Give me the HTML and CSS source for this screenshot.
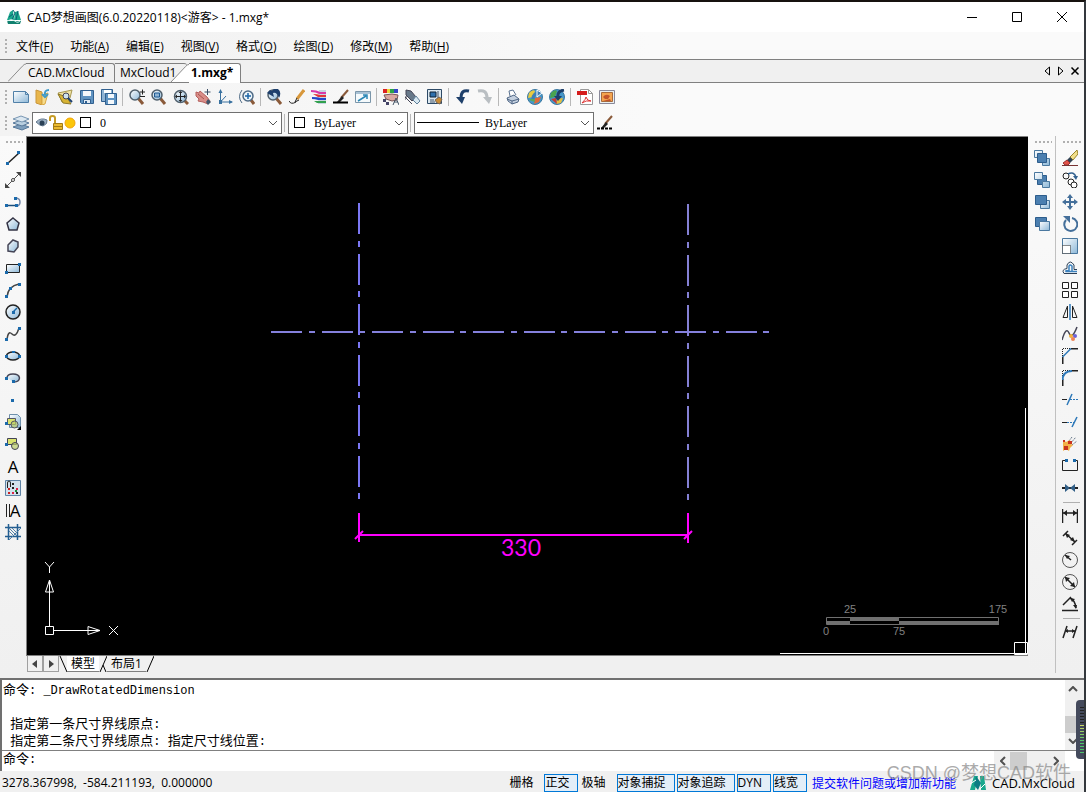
FILE: index.html
```
<!DOCTYPE html>
<html lang="zh-CN">

<head>
	<meta charset="UTF-8">
	<title>CAD梦想画图</title>
	<link rel="stylesheet" href="styles.css">
</head>

<body>
	<svg class="defs" width="0" height="0">
		<defs>
			<linearGradient id="sky" x1="0" y1="0" x2="1" y2="1">
				<stop offset="0" stop-color="#fff" />
				<stop offset="1" stop-color="#8db8d8" />
			</linearGradient>
		</defs>
		<symbol id="logo" viewBox="0 0 16 16">
			<path d="M1 12h14l-1 3H2z" fill="#11806f" stroke="none" />
			<path d="M4 3l3-2 1 10H1zM9 3l3-1 3 9H8z" fill="#1aa68c" stroke="none" />
			<path d="M7 1l2 3-3 7M12 2l-2 9M3 8l4-3" stroke="#0b5f73" />
			<path d="M1 12q5-3 8 0t6-1" stroke="#d8f4ee" />
		</symbol>
		<symbol id="lens" viewBox="0 0 16 16">
			<path d="M9 9l5 6" stroke="#8a5a3a" stroke-width="3" />
			<circle cx="6" cy="6" r="5" fill="url(#sky)" stroke="#4f5f6c" stroke-width="1.5" />
		</symbol>
		<symbol id="brush" viewBox="0 0 16 16">
			<path d="M15 1L8 9" stroke="#8a5a3a" stroke-width="2" />
			<path d="M9 7l2 2-4 4-3 0z" fill="#222" stroke="none" />
		</symbol>
		<symbol id="down" viewBox="0 0 10 6">
			<path d="M1 1l4 4 4-4" stroke="#555" />
		</symbol>
	</svg>

	<div class="app">
		<header class="titlebar">
			<svg class="icon"><use href="#logo" /></svg>
			<h1>CAD梦想画图(6.0.20220118)&lt;游客&gt; - 1.mxg*</h1>
			<button class="win" aria-label="最小化"><svg viewBox="0 0 12 12"><path d="M1 6.5h10" stroke="#000" /></svg></button>
			<button class="win" aria-label="最大化"><svg viewBox="0 0 12 12"><path d="M1.500 1.500h9v9h-9z" stroke="#000" /></svg></button>
			<button class="win" aria-label="关闭"><svg viewBox="0 0 12 12"><path d="M1 1l10 10M11 1L1 11" stroke="#000" /></svg></button>
		</header>

		<nav class="menu">
			<span class="grip"></span>
			<button>文件(<u>F</u>)</button>
			<button>功能(<u>A</u>)</button>
			<button>编辑(<u>E</u>)</button>
			<button>视图(<u>V</u>)</button>
			<button>格式(<u>O</u>)</button>
			<button>绘图(<u>D</u>)</button>
			<button>修改(<u>M</u>)</button>
			<button>帮助(<u>H</u>)</button>
		</nav>

		<div class="doctabs">
			<button class="doctab"><svg class="slant" viewBox="0 0 20 20"><path d="M0 20L16 3Q18 .5 20 .5" /></svg><span>CAD.MxCloud</span></button>
			<button class="doctab middle"><span>MxCloud1</span></button>
			<button class="doctab active"><svg class="slant" viewBox="0 0 20 20"><path d="M0 20L16 3Q18 .5 20 .5V20z" fill="#fff" stroke="none" /><path d="M0 20L16 3Q18 .5 20 .5" /></svg><span>1.mxg*</span></button>
			<div class="tabnav">
				<button aria-label="上一个"><svg viewBox="0 0 10 10"><path d="M7.500 1v8L3 5z" stroke="#000" /></svg></button>
				<button aria-label="下一个"><svg viewBox="0 0 10 10"><path d="M2.500 1v8L7 5z" stroke="#000" /></svg></button>
				<button aria-label="关闭标签"><svg viewBox="0 0 10 10"><path d="M1.500 1.500l7 7M8.500 1.500l-7 7" stroke="#000" stroke-width="1.500" /></svg></button>
			</div>
		</div>

		<div class="toolbar">
			<span class="grip"></span>
			<button class="tool" aria-label="新建"><svg viewBox="0 0 16 16"><path d="M.5 2.500h12l3 3v8H.5z" fill="url(#sky)" stroke="#5080a8" /><path d="M12.500 2.500v3h3" stroke="#5080a8" /></svg></button>
			<button class="tool" aria-label="打开"><svg viewBox="0 0 16 16"><path d="M1 1l6 2v13l-6-2z" fill="#e8b64c" stroke="#c9963a" /><path d="M7 6l6-2-3 11-3 1z" fill="#f7dc8c" stroke="#d9a844" /><path d="M14 1q-5 0-4 5M7 5l3 3 3-3" stroke="#3f9ac9" stroke-width="2" /></svg></button>
			<button class="tool" aria-label="打开图纸"><svg viewBox="0 0 16 16"><path d="M1 4l5-1 9-2-2 8-8 4z" fill="#f0e2a4" stroke="#a89850" /><path d="M1 5l5 9 8 1-4-7z" fill="#d8b434" stroke="#8e7a2c" /><circle cx="9" cy="7" r="3" fill="#cfe2ee" stroke="#445" /><path d="M11 9l4 4" stroke="#1d3f6c" stroke-width="2" /></svg></button>
			<button class="tool" aria-label="保存"><svg viewBox="0 0 16 16"><path d="M1.500 1.500h13v13h-12l-1-1z" fill="#5f93c1" stroke="#31608f" /><path d="M4 2h8v5H4z" fill="#f4f8fb" stroke="none" /><path d="M4.500 10.500h7v4h-7z" fill="#e3ecf4" stroke="#31608f" /><path d="M6 12h2v2H6z" fill="#31608f" stroke="none" /></svg></button>
			<button class="tool" aria-label="另存为"><svg viewBox="0 0 16 16"><path d="M.5.500h11v12H.5z" fill="#8fb3d3" stroke="#31608f" /><path d="M3 1h7v3H3z" fill="#fff" stroke="none" /><path d="M4.500 4.500h11v11h-11z" fill="#5f93c1" stroke="#31608f" /><path d="M7 5h6v4H7zM7 11h6v4H7z" fill="#f4f8fb" stroke="none" /></svg></button>
			<span class="sep"></span>
			<button class="tool" aria-label="缩放"><svg viewBox="0 0 16 16"><use href="#lens" /><path d="M11 3h5M13.500.5v5M11 7.500h5" stroke="#222" /></svg></button>
			<button class="tool" aria-label="窗口缩放"><svg viewBox="0 0 16 16"><use href="#lens" /><path d="M3.500 4h5v4h-5z" fill="#8fb3d3" stroke="#1d5a92" /></svg></button>
			<button class="tool" aria-label="范围缩放"><svg viewBox="0 0 16 16"><path d="M11 11l4 4" stroke="#8a5a3a" stroke-width="3" /><circle cx="7.500" cy="7.500" r="6" fill="url(#sky)" stroke="#4f5f6c" stroke-width="1.500" /><path d="M3 7.500h9M7.500 3v9" stroke="#222" /><path d="M7.500 2l2 2h-4zM7.500 13l2-2h-4zM2 7.500l2-2v4zM13 7.500l-2-2v4z" fill="#222" stroke="none" /></svg></button>
			<button class="tool" aria-label="平移"><svg viewBox="0 0 16 16"><path d="M1 3l3 1 1-2 7 6 3 4-2 3-5-2-5-1 1-2-3-3z" fill="#d98d88" stroke="#b5605d" /><path d="M13 10l3 3-3 3-2-3z" fill="#415569" stroke="none" /><path d="M12.500 0v6M9.500 3h6" stroke="#3b4f66" /><path d="M3 5l6 5" stroke="#a85552" /></svg></button>
			<button class="tool" aria-label="坐标系"><svg viewBox="0 0 16 16"><path d="M3.500 2v11H15M3.500 13L9 7" stroke="#39719f" /><path d="M3.500 0l2 4h-4zM16 13l-4-2v4zM2 11h3v4H2z" fill="#39719f" stroke="none" /></svg></button>
			<button class="tool" aria-label="实时缩放"><svg viewBox="0 0 16 16"><path d="M3 1Q-2 8 3 14" stroke="#4e6a85" /><path d="M12 11l3 4" stroke="#8a5a3a" stroke-width="3" /><circle cx="9" cy="7" r="5" fill="#edf5fa" stroke="#4e6a85" stroke-width="1.500" /><path d="M6 7h6M9 4v6" stroke="#1d66a8" stroke-width="1.500" /></svg></button>
			<span class="sep"></span>
			<button class="tool" aria-label="上一视图"><svg viewBox="0 0 16 16"><use href="#lens" /><path d="M0 4l7 4-1-4q4-1 6 5 3-6-1-9-5-1-6 2L3 1z" fill="#1d3f6c" stroke="none" /></svg></button>
			<button class="tool" aria-label="画笔"><svg viewBox="0 0 16 16"><path d="M15 1L8 10" stroke="#d8983c" stroke-width="3" /><path d="M8 9l-2 4 4-2M0 12q2 4 7 1" stroke="#222" /></svg></button>
			<button class="tool" aria-label="图层颜色"><svg viewBox="0 0 16 16"><path d="M8 1h7v14H7z" fill="#c5d3e0" stroke="none" /><path d="M0 1q6 0 9 2h6v2H8Q5 3 0 3z" fill="#d839a8" stroke="none" /><path d="M2 5q5 0 7 1h6v2H7z" fill="#e23636" stroke="none" /><path d="M1 8q6 0 8 1h6v2H7Q4 10 1 10z" fill="#2447c9" stroke="none" /><path d="M3 12h12v2H6z" fill="#31a04d" stroke="none" /></svg></button>
			<button class="tool" aria-label="线型"><svg viewBox="0 0 16 16"><use href="#brush" /><path d="M0 13.500h15" stroke="#000" stroke-width="2" /></svg></button>
			<button class="tool" aria-label="外部参照"><svg viewBox="0 0 16 16"><path d="M.5 2.500h15v11H.5z" fill="#f5fafc" stroke="#7b96aa" /><path d="M1 3h14v2H1z" fill="#a9c2d5" stroke="none" /><path d="M3 12l8-5M8 6h4v4" stroke="#2a86b5" stroke-width="1.500" /></svg></button>
			<span class="sep"></span>
			<button class="tool" aria-label="特性"><svg viewBox="0 0 16 16"><path d="M0 0h4v4H0z" fill="#d22" stroke="none" /><path d="M4 0h3v4H4z" fill="#ead83b" stroke="none" /><path d="M7 0h4v4H7z" fill="#29a348" stroke="none" /><path d="M11 0h4v4h-4z" fill="#3445c4" stroke="none" /><path d="M1 6l8-1 6 1-1 5-5 1-6-2z" fill="#d9a7a0" stroke="#755" /><path d="M0 10h3v3H0zM3 13h3v3H3z" fill="#446" stroke="none" /><path d="M10 16l3-7 3 7M11 13h4" stroke="#456" /></svg></button>
			<button class="tool" aria-label="特性匹配"><svg viewBox="0 0 16 16"><path d="M1 1l5 1 5 6-4 4-6-6z" fill="#68798a" stroke="#445" /><path d="M11 7l4 5-3 3-4-4z" fill="#d8e8f2" stroke="#5f7f98" /><path d="M0 8l7 7M2 8H0v3" stroke="#445" /></svg></button>
			<button class="tool" aria-label="设计中心"><svg viewBox="0 0 16 16"><path d="M.5.5h14v14H.5z" fill="#dce8f0" stroke="#2d4a66" /><path d="M3 3h6v5H3z" fill="#2f71ad" stroke="#123" /><path d="M11 2v8M3 11h4M3 13h5" stroke="#456" /><path d="M8 11l4-3 3 2-2 5-3-1z" fill="#c98b34" stroke="#765" /></svg></button>
			<span class="sep"></span>
			<button class="tool" aria-label="撤销"><svg viewBox="0 0 16 16"><path d="M14 2Q6 0 6 9" stroke="#1e3f6a" stroke-width="3" /><path d="M1 8h9l-3 7z" fill="#1e3f6a" stroke="none" /></svg></button>
			<button class="tool" aria-label="重做"><svg viewBox="0 0 16 16"><path d="M1 2q9-2 9 7" stroke="#b9bec2" stroke-width="3" /><path d="M6 8h9l-3 7z" fill="#b9bec2" stroke="none" /></svg></button>
			<span class="sep"></span>
			<button class="tool" aria-label="打印"><svg viewBox="0 0 16 16"><path d="M5 7L4 2l4-1 3 5" fill="#fff" stroke="#5b7290" /><path d="M2 9l7-3 5 4-1 3-6 2-4-3z" fill="#c4d0df" stroke="#4e6584" /><path d="M2 10l5 2 7-2M7 12v3" stroke="#4e6584" /></svg></button>
			<button class="tool" aria-label="上传"><svg viewBox="0 0 16 16"><circle cx="8" cy="8" r="7.500" fill="#4597ca" stroke="#3c78a0" /><path d="M2 4q4-4 6-2L6 8 1 9z" fill="#e8cb42" stroke="none" /><path d="M8 9l6-1-2 5-5 2z" fill="#df6a3c" stroke="none" /><path d="M2 11l5-3 1 5z" fill="#5aaa58" stroke="none" /><path d="M6 10q0-6 6-6" stroke="#3f7fb5" stroke-width="3" /><path d="M10 1l5 3-5 4z" fill="#3f7fb5" stroke="#fff" /></svg></button>
			<button class="tool" aria-label="下载"><svg viewBox="0 0 16 16"><circle cx="8" cy="8" r="7.500" fill="#4597ca" stroke="#3c78a0" /><path d="M2 4q4-4 6-2L6 8 1 9z" fill="#49a34f" stroke="none" /><path d="M8 10l6-1-2 5-5 1z" fill="#e5be3e" stroke="none" /><path d="M2 10l5-1 1 6z" fill="#c63b34" stroke="none" /><path d="M15 1Q8 2 9 8" stroke="#1e3f6a" stroke-width="3" /><path d="M5 7h8l-4 5z" fill="#1e3f6a" stroke="none" /></svg></button>
			<span class="sep"></span>
			<button class="tool" aria-label="导出PDF"><svg viewBox="0 0 16 16"><path d="M3.500.5h8l4 4v11h-12z" fill="#fff" stroke="#999" /><path d="M11.500.5v4h4" stroke="#999" /><path d="M0 2h10v4H0z" fill="#d51c1c" stroke="none" /><path d="M5 14q4-4 4-6 1 4 5 4-5-1-9 2" stroke="#d33" /></svg></button>
			<button class="tool" aria-label="导出图片"><svg viewBox="0 0 16 16"><path d="M.5 1.500h15v13H.5z" fill="#e9eef0" stroke="#889" /><path d="M2.500 3.500h11v9h-11z" fill="#f4a44f" stroke="#a86a3c" /><path d="M4 8q3-4 7-1l-2 3H6zM4 12l7-2 1 2z" fill="#c2542c" stroke="none" /></svg></button>
		</div>

		<div class="toolbar props">
			<span class="grip"></span>
			<button class="tool" aria-label="图层"><svg viewBox="0 0 16 16"><path d="M0 12l8-3 8 3-7 3z" fill="#7e9fbd" stroke="#58799a" /><path d="M0 8l8-3 8 3-7 3z" fill="#b9cfe0" stroke="#58799a" /><path d="M0 4l8-3 8 3-7 3z" fill="#dbe7f0" stroke="#7896b2" /></svg></button>
			<div class="combo layer">
				<div class="marks">
					<svg viewBox="0 0 14 16"><path d="M1 7q5-5 11-2 1 4-4 6-3 0-7-4z" fill="#9bb0c4" stroke="#667b90" /><circle cx="7" cy="8" r="2.500" fill="#2b4156" stroke="none" /></svg>
					<svg viewBox="0 0 14 16"><path d="M1 6V3q0-2 2.500-2T6 3v6" stroke="#c59b25" stroke-width="2" /><path d="M4.500 8.500h9v6h-9z" fill="#eab92d" stroke="#a37a14" /><path d="M5 11.500h8" stroke="#a37a14" /></svg>
					<svg viewBox="0 0 14 16"><circle cx="7" cy="8" r="5" fill="#fbc60a" stroke="#f3a50a" /></svg>
					<i class="swatch"></i>
				</div>
				<select aria-label="当前图层"><option>0</option></select>
				<svg class="arrow"><use href="#down" /></svg>
			</div>
			<span class="sep"></span>
			<div class="combo color">
				<div class="marks"><i class="swatch"></i></div>
				<select aria-label="颜色"><option>ByLayer</option></select>
				<svg class="arrow"><use href="#down" /></svg>
			</div>
			<span class="sep"></span>
			<div class="combo ltype">
				<div class="marks"><i class="line"></i></div>
				<select aria-label="线型"><option>ByLayer</option></select>
				<svg class="arrow"><use href="#down" /></svg>
			</div>
			<button class="tool" aria-label="线型管理"><svg viewBox="0 0 16 16"><use href="#brush" /><path d="M0 13.500h15" stroke="#000" stroke-width="2" stroke-dasharray="3 1" /></svg></button>
		</div>

		<main class="work">
			<div class="side left">
				<span class="grip flat"></span>
				<button class="tool" aria-label="直线"><svg viewBox="0 0 16 16"><path d="M2 14L14 3" stroke-width="1.500" /><path class="node" d="M1 12h3v3H1zM12 1h3v3h-3z" /></svg></button>
				<button class="tool" aria-label="构造线"><svg viewBox="0 0 16 16"><path d="M1 15L15 1" stroke="#555" /><path d="M0 16v-5l5 5zM16 0v5l-5-5z" fill="#444" stroke="none" /><circle cx="8" cy="8" r="1.500" fill="#fff" stroke="#444" /></svg></button>
				<button class="tool" aria-label="多段线"><svg viewBox="0 0 16 16"><path d="M1 11.500h10" stroke="#1b4d7b" stroke-width="1.500" /><path d="M10 4q5 0 5 4t-4 4" stroke="#7186a8" stroke-width="1.500" /><path class="node" d="M0 10h3v3H0zM9 3h3v3H9zM10 10h3v3h-3z" /></svg></button>
				<button class="tool" aria-label="正多边形"><svg viewBox="0 0 16 16"><path d="M8 2l6 5-2 7H4L2 7z" fill="url(#sky)" stroke="#334" stroke-width="1.500" /></svg></button>
				<button class="tool" aria-label="多边形"><svg viewBox="0 0 16 16"><path d="M8 2l5 2v5l-4 5-6-1V7z" fill="url(#sky)" stroke="#445" stroke-width="1.500" /></svg></button>
				<button class="tool" aria-label="矩形"><svg viewBox="0 0 16 16"><path d="M1.500 4.500h13v8h-13z" fill="url(#sky)" /><path class="node" d="M0 11h3v3H0zM13 3h3v3h-3z" /></svg></button>
				<button class="tool" aria-label="圆弧"><svg viewBox="0 0 16 16"><path d="M2 15Q3 4 14 2" stroke="#444" stroke-width="1.500" /><path class="node" d="M0 13h3v3H0zM4 5h3v3H4zM13 1h3v3h-3z" /></svg></button>
				<button class="tool" aria-label="圆"><svg viewBox="0 0 16 16"><circle cx="8" cy="8" r="7" fill="url(#sky)" stroke-width="1.500" /><path d="M8 8l4-4" stroke="#1b6aab" stroke-width="1.500" /><path class="node" d="M7 7h3v3H7z" /></svg></button>
				<button class="tool" aria-label="样条曲线"><svg viewBox="0 0 16 16"><path d="M2 14Q3 4 7 8t7-6" stroke="#444" stroke-width="1.500" /><path class="node" d="M0 12h3v3H0zM13 1h3v3h-3z" /></svg></button>
				<button class="tool" aria-label="椭圆"><svg viewBox="0 0 16 16"><ellipse cx="8" cy="8" rx="6.500" ry="4" fill="url(#sky)" stroke-width="1.500" /><path class="node" d="M0 7h3v3H0zM13 7h3v3h-3zM7 3h3v2H7z" /></svg></button>
				<button class="tool" aria-label="椭圆弧"><svg viewBox="0 0 16 16"><path d="M2 8q0-4 6-4t6.500 4Q14 12 9 12" fill="url(#sky)" stroke="#445" stroke-width="1.500" /><path class="node" d="M0 7h3v3H0zM7 10h3v3H7z" /></svg></button>
				<button class="tool" aria-label="点"><svg viewBox="0 0 16 16"><path class="node" d="M6 7h3v3H6z" /></svg></button>
				<button class="tool" aria-label="插入块"><svg viewBox="0 0 16 16"><path d="M4.500.500h8l3 3v10h-11z" fill="url(#sky)" stroke="#6d8fab" /><path d="M2.500 4.500h8v6h-8z" fill="#d9e36f" stroke="#556" /><circle cx="9.500" cy="10.500" r="3.500" fill="#b9cc6a" fill-opacity=".7" stroke="#556" /><path class="node" d="M0 8h3v3H0z" /><path d="M16 12v4h-4z" fill="#000" stroke="none" /></svg></button>
				<button class="tool" aria-label="创建块"><svg viewBox="0 0 16 16"><path d="M2.500 2.500h9v6h-9z" fill="#d9e36f" stroke="#445" /><circle cx="10" cy="10" r="3.500" fill="#b9cc6a" fill-opacity=".7" stroke="#445" /><path class="node" d="M0 7h3v3H0z" /></svg></button>
				<button class="tool letter" aria-label="单行文字">A</button>
				<button class="tool" aria-label="填充"><svg viewBox="0 0 16 16"><path d="M.5.5h15v15H.5z" fill="#d3e1ed" stroke="#5f83a5" /><path d="M2.500 8V3q0-2 1.500-2t1.500 2v4" /><path d="M3 8h2v2H3zM3 12h2v2H3z" fill="#c22" stroke="none" /><path d="M7 3h2v2H7zM7 7h2v2H7zM11 12h2v2h-2z" fill="#222" stroke="none" /><path d="M7 12h2v2H7zM11 8h2v2h-2z" fill="#d24" stroke="none" /><path d="M10 10h2v2h-2z" fill="#1a8c3c" stroke="none" /></svg></button>
				<button class="tool letter" aria-label="多行文字"><i></i>A</button>
				<button class="tool" aria-label="图案填充"><svg viewBox="0 0 16 16"><path d="M3.500 0v16M12.500 0v16M0 3.500h16M0 12.500h16" stroke="#235e91" stroke-width="1.500" /><path d="M4 4l8 8M7 4l5 5M4 7l5 5M4 16L16 4" stroke="#5180a8" /></svg></button>
			</div>

			<div class="view">
				<div class="canvas">
					<svg class="drawing">
						<g stroke="#7c78f4" stroke-width="2" stroke-dasharray="31 7 6 7 31 6 6 7">
							<path d="M332 66v300" />
							<path d="M661 67v299" stroke="#8480d4" />
							<path d="M244 195h498" stroke="#8480dc" />
						</g>
						<g stroke="#f0f" stroke-width="2">
							<path d="M332 376v29M661 376v30M332 398h329" />
							<path d="M328 402l8-8M657 402l8-8" />
						</g>
						<text x="474" y="419">330</text>
					</svg>
					<svg class="axis" viewBox="0 0 80 80">
						<path d="M22.500 31v34M26 69.500h35M18.500 65.500h8v8h-8z" />
						<path d="M22.500 19l4 12h-8zM22.500 19v12M73 69.500l-12-4v8zM73 69.500H61" />
						<path d="M18 1l4.500 5 4.500-5M22.500 6v6M82 65l9 9M91 65l-9 9" />
					</svg>
					<svg class="scale" viewBox="0 0 190 40">
						<path d="M6.500 17.500h172v7h-172z" />
						<path d="M30 19h49M7 23h23M79 23h100" stroke-width="4" />
						<text x="30" y="13">25</text><text x="178" y="13">175</text>
						<text x="6" y="35">0</text><text x="79" y="35">75</text>
					</svg>
					<svg class="cursor" viewBox="0 0 250 250">
						<path d="M247.500 3v247M2 248.500h248M236.500 237.500h13v12h-13z" stroke="#fff" />
					</svg>
				</div>
				<div class="sheets">
					<button class="step" aria-label="向左"><svg viewBox="0 0 8 10"><path d="M6 1v8L1 5z" fill="#444" stroke="none" /></svg></button>
					<button class="step" aria-label="向右"><svg viewBox="0 0 8 10"><path d="M2 1v8l5-4z" fill="#444" stroke="none" /></svg></button>
					<svg class="edge" viewBox="0 0 8 16"><path d="M1 0l7 16" stroke="#000" /></svg>
					<button class="sheet on">模型</button>
					<svg class="edge" viewBox="0 0 8 16"><path d="M8 0L1 16M4 9l3 7" stroke="#000" /></svg>
					<button class="sheet">布局1</button>
					<svg class="edge" viewBox="0 0 8 16"><path d="M8 0L1 16" stroke="#000" /></svg>
				</div>
			</div>

			<div class="side order">
				<span class="grip flat"></span>
				<button class="tool" aria-label="前置"><svg viewBox="0 0 16 16"><path d="M.5.5h8v7h-8zM8.500 8.500h7v7h-7z" fill="url(#sky)" stroke="#4a789f" /><path d="M3.500 3.500h9v9h-9z" fill="#4b7fb0" stroke="#2d5d8c" /></svg></button>
				<button class="tool" aria-label="后置"><svg viewBox="0 0 16 16"><path d="M3.500 3.500h9v9h-9z" fill="#4b7fb0" stroke="#2d5d8c" /><path d="M.5.5h8v7h-8zM8.500 9.500h7v6h-7z" fill="url(#sky)" stroke="#4a789f" /></svg></button>
				<button class="tool" aria-label="置于对象之上"><svg viewBox="0 0 16 16"><path d="M6.500 6.500h9v8h-9z" fill="url(#sky)" stroke="#4a789f" /><path d="M1.500 1.500h11v9h-11z" fill="#4b7fb0" stroke="#2d5d8c" /></svg></button>
				<button class="tool" aria-label="置于对象之下"><svg viewBox="0 0 16 16"><path d="M1.500 1.500h11v9h-11z" fill="#4b7fb0" stroke="#2d5d8c" /><path d="M5.500 5.500h10v9h-10z" fill="url(#sky)" stroke="#4a789f" /></svg></button>
			</div>

			<div class="side modify">
				<span class="grip flat"></span>
				<button class="tool" aria-label="删除"><svg viewBox="0 0 16 16"><path d="M15 0L8 7l3 3 5-6z" fill="#f2e08a" stroke="#9a852c" /><path d="M8 7l-3 3 3 3 3-3z" fill="#345" stroke="none" /><path d="M5 10l-4 3 2 2h3l2-2z" fill="#e2544a" stroke="#933" /><path d="M0 15.500h16" stroke="#733" /></svg></button>
				<button class="tool" aria-label="复制"><svg viewBox="0 0 16 16"><circle cx="4" cy="4" r="3" /><circle cx="9" cy="10" r="3" fill="#fff" /><circle cx="12" cy="13" r="3" fill="#fff" /><path d="M6 2q6-3 8 3" stroke="#31608f" stroke-width="1.500" /><path d="M11 4h5l-2 4z" fill="#31608f" stroke="none" /></svg></button>
				<button class="tool" aria-label="移动"><svg viewBox="0 0 16 16"><path d="M8 2v12M2 8h12" stroke="#446f9a" stroke-width="2" /><path d="M8 0l3 4H5zM8 16l3-4H5zM0 8l4-3v6zM16 8l-4-3v6z" fill="#446f9a" stroke="none" /></svg></button>
				<button class="tool" aria-label="旋转"><svg viewBox="0 0 16 16"><path d="M4 4a6.500 6.500 0 1 0 6-2" stroke="#446f9a" stroke-width="2" /><path d="M1 0h7v7z" fill="#446f9a" stroke="none" /></svg></button>
				<button class="tool" aria-label="缩放对象"><svg viewBox="0 0 16 16"><path d="M.5.5h15v15H.5z" fill="url(#sky)" stroke="#4a789f" /><path d="M.5 7.500h8v8h-8z" fill="#fff" stroke="#222" stroke-dasharray="1 1" /></svg></button>
				<button class="tool" aria-label="偏移"><svg viewBox="0 0 16 16"><path d="M15 13.500H2q-3-4 3-5V5q3-6 7 0v4.500h3" stroke="#2c4057" /><path d="M15 11.500H4q-1-1 3-1V6q1-2 3 0v5" stroke="#3c82bf" stroke-width="1.500" /></svg></button>
				<button class="tool" aria-label="阵列"><svg viewBox="0 0 16 16"><path d="M.5.500h6v6h-6zM9.500.5h6v6h-6zM.5 9.500h6v6h-6zM9.500 9.500h6v6h-6z" fill="#fff" /></svg></button>
				<button class="tool" aria-label="镜像"><svg viewBox="0 0 16 16"><path d="M5.500 2v11.500H1zM10.500 2v11.500H15z" /><path d="M8 0v16" stroke="#2d78b8" stroke-width="1.500" /></svg></button>
				<button class="tool" aria-label="编辑曲线"><svg viewBox="0 0 16 16"><path d="M0 14Q4 0 7 7t8-6" stroke="#445" stroke-width="1.500" /><circle cx="9" cy="10" r="2" fill="#f3b23a" stroke="none" /><circle cx="13" cy="10" r="2" fill="#6c62d8" stroke="none" /><circle cx="11" cy="13" r="2" fill="#ee8455" stroke="none" /></svg></button>
				<button class="tool" aria-label="倒角"><svg viewBox="0 0 16 16"><path d="M.5 16V9M9 .5h7" stroke-width="2" /><path d="M.5 8V.5H8" stroke-dasharray="1 1" /><path d="M.5 9L9 .5" stroke="#2d78b8" stroke-width="1.500" /></svg></button>
				<button class="tool" aria-label="圆角"><svg viewBox="0 0 16 16"><path d="M.5 16V9M9 .5h7" stroke-width="2" /><path d="M.5 8V.5H8" stroke-dasharray="1 1" /><path d="M.5 10Q1 1 10 1" stroke="#2d78b8" stroke-width="2" /></svg></button>
				<button class="tool" aria-label="修剪"><svg viewBox="0 0 16 16"><path d="M0 7.500h5" /><path d="M8 7.500h8" stroke="#2d78b8" stroke-dasharray="2 1" /><path d="M5 13l5-11" stroke="#2d78b8" stroke-width="1.500" /></svg></button>
				<button class="tool" aria-label="延伸"><svg viewBox="0 0 16 16"><path d="M0 8.500h5" /><path d="M5 8.500h7" stroke="#2d78b8" stroke-dasharray="2 1" /><path d="M10 13l5-10" stroke="#2d78b8" stroke-width="1.500" /></svg></button>
				<button class="tool" aria-label="分解"><svg viewBox="0 0 16 16"><path d="M8 8l6-7M10 9l5-4M7 5l3-4" stroke="#678" stroke-dasharray="2 1" /><path d="M1 4l3 2 4-2 1 4 2 1-3 3-1 3-3-2-3 2V9z" fill="#f2b047" stroke="none" /><path d="M6 5h4v3H6zM2 10h4v4H2zM1 4h2v2H1z" fill="#c8321f" stroke="none" /></svg></button>
				<button class="tool" aria-label="打断"><svg viewBox="0 0 16 16"><path d="M3 2.500H.5v10h15v-10H13" /><path class="node" d="M3 1h3v3H3zM11 1h3v3h-3z" /></svg></button>
				<button class="tool" aria-label="合并"><svg viewBox="0 0 16 16"><path d="M0 8h16" stroke-width="2" /><path d="M3 4l5 4-5 4zM13 4L8 8l5 4z" fill="#315f87" stroke="none" /></svg></button>
				<span class="sep"></span>
				<button class="tool" aria-label="线性标注"><svg viewBox="0 0 16 16"><path d="M.5 1v14M15.500 1v14M1 5h14" stroke-width="1.500" /><path d="M1 5l4-3v6zM15 5l-4-3v6z" fill="#222" stroke="none" /></svg></button>
				<button class="tool" aria-label="对齐标注"><svg viewBox="0 0 16 16"><path d="M1 6l5-5M10 15l5-5M3 3l10 9" stroke-width="1.500" /><path d="M3 3l5 2-3 3zM13 12l-5-2 3-3z" fill="#222" stroke="none" /></svg></button>
				<button class="tool" aria-label="半径标注"><svg viewBox="0 0 16 16"><circle cx="8" cy="8" r="7.500" stroke="#555" /><path d="M3 3l6 5" stroke-width="1.500" /><path d="M3 3l5 1-3 3z" fill="#222" stroke="none" /></svg></button>
				<button class="tool" aria-label="直径标注"><svg viewBox="0 0 16 16"><circle cx="8" cy="8" r="7.500" stroke="#555" /><path d="M3 3l10 10" stroke-width="1.500" /><path d="M3 3l5 1-4 4zM13 13l-5-1 4-4z" fill="#222" stroke="none" /></svg></button>
				<button class="tool" aria-label="角度标注"><svg viewBox="0 0 16 16"><path d="M0 14.500h16M1 9l8-8M8 2q5 2 6 10" stroke-width="1.500" /><path d="M8 2l5 1-3 3zM14 13l-3-4h4z" fill="#222" stroke="none" /></svg></button>
				<span class="sep"></span>
				<button class="tool" aria-label="编辑标注"><svg viewBox="0 0 16 16"><path d="M1 14L5 2M11 14l4-12M4 7h9" stroke-width="1.500" /><path d="M3 7l3-2v4zM13 7l-3-2v4z" fill="#222" stroke="none" /></svg></button>
			</div>
		</main>

		<section class="command">
			<div class="log">
				<div class="lines">
					<p><span>命令</span>: _DrawRotatedDimension</p>
					<p>&nbsp;</p>
					<p>&nbsp;<span>指定第一条尺寸界线原点</span>:</p>
					<p>&nbsp;<span>指定第二条尺寸界线原点</span>: <span>指定尺寸线位置</span>:</p>
				</div>
				<div class="vscroll">
					<svg viewBox="0 0 10 6"><path d="M1 5l4-4 4 4" stroke="#505050" stroke-width="2" /></svg>
					<i></i>
					<svg viewBox="0 0 10 6"><path d="M1 1l4 4 4-4" stroke="#505050" stroke-width="2" /></svg>
				</div>
			</div>
			<div class="prompt">
				<label for="cmd"><span>命令</span>:</label>
				<input id="cmd" type="text">
				<div class="hscroll">
					<svg viewBox="0 0 6 10"><path d="M5 1L1 5l4 4" stroke="#505050" stroke-width="2" /></svg>
					<i></i>
					<svg viewBox="0 0 6 10"><path d="M1 1l4 4-4 4" stroke="#505050" stroke-width="2" /></svg>
				</div>
			</div>
		</section>

		<footer class="status">
			<span class="coords">3278.367998,&nbsp; -584.211193,&nbsp; 0.000000</span>
			<button class="mode">栅格</button>
			<button class="mode on">正交</button>
			<button class="mode">极轴</button>
			<button class="mode on">对象捕捉</button>
			<button class="mode on">对象追踪</button>
			<button class="mode on">DYN</button>
			<button class="mode on">线宽</button>
			<a href="#">提交软件问题或增加新功能</a>
			<span class="brand"><svg class="icon" viewBox="0 0 16 16"><path d="M4 1h4L5 15H0zM10 1h4l2 14h-5z" fill="#18a98d" stroke="none" /><path d="M6 1l5 7-3 7-4-5z" fill="#0b7c83" stroke="none" /><path d="M0 9l6-4M10 14l5-5" stroke="#fff" /></svg>CAD.MxCloud</span>
		</footer>

		<div class="watermark">CSDN @梦想CAD软件</div>
		<div class="meter"><i></i></div>
	</div>
</body>

</html>
```
FILE: styles.css
```
* {
	box-sizing: border-box;
}
body {
	margin: 0;
	background-color: #f0f0f0;
	color: #000;
	font: 12px "Open Sans", "Noto Sans CJK SC", sans-serif;
}
button {
	margin: 0;
	padding: 0;
	border: 0;
	background: none;
	color: inherit;
	font: inherit;
	white-space: nowrap;
}
svg {
	display: block;
	flex: none;
	fill: none;
	stroke: #222;
}
.defs {
	position: absolute;
}
.app {
	position: relative;
	display: flex;
	flex-direction: column;
	min-height: 100vh;
	border-top: 2px solid #17120f;
	border-right: 2px solid #34383d;
	overflow: hidden;
}
.icon {
	width: 16px;
	height: 16px;
}

/* title and menu */
.titlebar {
	display: flex;
	align-items: center;
	height: 30px;
	padding-left: 6px;
	background-color: #fff;
}
.titlebar h1 {
	flex: 1;
	margin: 0 0 0 5px;
	font-size: 12px;
	font-weight: normal;
}
.win {
	width: 45px;
	height: 28px;
}
.win svg {
	width: 12px;
	height: 12px;
	margin: auto;
}
.menu {
	display: flex;
	align-items: center;
	gap: 17px;
	height: 28px;
	padding-left: 4px;
	border-bottom: 1px solid #808080;
	background: linear-gradient(to right, #f0f0f0, #fafafa 60%);
}
.menu .grip {
	margin-right: -11px;
}
.grip {
	display: block;
	width: 6px;
	height: 16px;
	background: radial-gradient(circle at 2px 2px, #b0b0b0 1px, transparent 1px) 0 0 / 6px 4px;
}
.grip.flat {
	width: auto;
	height: 4px;
	margin: 0 3px 3px;
	background-size: 4px 4px;
}

/* document tabs */
.doctabs {
	display: flex;
	align-items: flex-end;
	height: 23px;
	padding-left: 8px;
	border-bottom: 1px solid #808080;
}
.doctab {
	display: flex;
	height: 19px;
}
.doctab span {
	width: 89px;
	height: 19px;
	padding-left: 2px;
	border-top: 1px solid #808080;
	border-right: 1px solid #808080;
	border-radius: 0 3px 0 0;
	line-height: 18px;
	text-align: left;
}
.slant {
	width: 18px;
	height: 19px;
	stroke: #808080;
}
.doctab.middle span {
	width: 72px;
	padding-left: 5px;
	border-right: 0;
}
.doctab.active {
	position: relative;
	height: 20px;
	margin: 0 0 -1px -16px;
	font-weight: bold;
}
.doctab.active .slant {
	height: 20px;
}
.doctab.active span {
	width: 52px;
	height: 20px;
	background-color: #fff;
}
.tabnav {
	display: flex;
	align-items: center;
	gap: 4px;
	height: 22px;
	margin-left: auto;
	padding-right: 4px;
}
.tabnav svg {
	width: 10px;
	height: 10px;
}

/* toolbars */
.toolbar {
	display: flex;
	align-items: center;
	height: 28px;
	padding-left: 4px;
	background: linear-gradient(to right, #f3f3f3, #fafafa 60%);
}
.toolbar.props {
	height: 25px;
	padding-bottom: 2px;
}
.tool {
	display: flex;
	align-items: center;
	justify-content: center;
	flex: none;
	width: 22px;
	height: 22px;
}
.tool svg {
	width: 16px;
	height: 16px;
}
.tool .node {
	fill: #1b6aab;
	stroke: none;
}
.toolbar .sep {
	width: 2px;
	height: 18px;
	margin: 0 2px;
	border-left: 1px solid #b8b8b8;
}
.combo {
	position: relative;
	display: flex;
	align-items: center;
	height: 22px;
	border: 1px solid #707070;
	background-color: #fff;
}
.combo select {
	width: 100%;
	height: 100%;
	padding: 0;
	border: 0;
	background: none;
	color: #000;
	font: 12px "Liberation Serif", serif;
	appearance: none;
}
.layer {
	width: 250px;
}
.color {
	width: 120px;
}
.ltype {
	width: 180px;
}
.marks {
	display: flex;
	align-items: center;
	flex: none;
	padding-left: 2px;
}
.marks svg {
	width: 14px;
	height: 16px;
}
.swatch {
	width: 11px;
	height: 11px;
	margin: 0 9px 0 3px;
	border: 1px solid #000;
	background-color: #fff;
}
.line {
	width: 62px;
	height: 1px;
	margin-right: 6px;
	background-color: #000;
}
.arrow {
	width: 10px;
	height: 6px;
	margin-right: 3px;
}

/* work area */
.work {
	display: flex;
	flex: 1;
}
.side {
	flex: none;
	padding-top: 4px;
	padding-bottom: 16px;
	background: linear-gradient(#fafafa, #f0f0f0);
}
.left {
	width: 26px;
	padding-left: 2px;
}
.order {
	width: 28px;
	padding-left: 3px;
	border-right: 1px solid #c0c0c0;
}
.modify {
	width: 28px;
	padding-left: 3px;
}
.side .sep {
	display: block;
	height: 1px;
	margin: 3px 4px 2px;
	background-color: #b0b0b0;
}
.letter {
	font: 17px "Open Sans", sans-serif;
}
.letter i {
	width: 4px;
	height: 13px;
	border: solid #222;
	border-width: 0 1px;
}
.view {
	display: flex;
	flex: 1;
	flex-direction: column;
	min-width: 0;
}
.canvas {
	position: relative;
	flex: 1;
	border: 1px solid #808080;
	border-right: 0;
	background-color: #000;
}
.canvas svg {
	position: absolute;
	overflow: visible;
}
.drawing {
	top: 0;
	left: 0;
	width: 100%;
	height: 100%;
}
.drawing text {
	fill: #f0f;
	stroke: none;
	font: 23px Lato, sans-serif;
}
.axis {
	bottom: 14px;
	left: 0;
	width: 80px;
	height: 80px;
	stroke: #fff;
}
.scale {
	right: 18px;
	bottom: 15px;
	width: 190px;
	height: 40px;
	stroke: #707070;
}
.scale text {
	fill: #808080;
	stroke: none;
	font: 11px "Liberation Sans", sans-serif;
	text-anchor: middle;
}
.cursor {
	right: 0;
	bottom: 0;
	width: 250px;
	height: 250px;
}
.sheets {
	display: flex;
	height: 17px;
	padding-left: 1px;
}
.step {
	width: 16px;
	height: 16px;
	border: 1px solid #a0a0a0;
	border-top: 0;
}
.step svg {
	width: 8px;
	height: 10px;
	margin: auto;
}
.edge {
	width: 8px;
	height: 16px;
}
.sheet {
	height: 16px;
	padding: 0 4px;
	border-bottom: 1px solid #808080;
	line-height: 16px;
}
.sheet.on {
	background-color: #fff;
}

/* command window */
.command {
	margin-top: 5px;
	border-top: 2px solid #707070;
	border-left: 2px solid #707070;
	background-color: #fff;
	font: 12px/17px "Liberation Mono", monospace;
}
.command span {
	font: 13px/1 "Noto Sans CJK SC", sans-serif;
}
.log {
	display: flex;
	border-bottom: 1px solid #808080;
}
.lines {
	flex: 1;
	padding: 2px 2px 0 1px;
}
.lines p {
	height: 17px;
	margin: 0;
}
.vscroll {
	display: flex;
	flex-direction: column;
	align-items: center;
	width: 19px;
	padding: 6px 3px 6px 0;
	background-color: #f0f0f0;
}
.vscroll svg {
	width: 10px;
	height: 6px;
}
.vscroll i {
	width: 16px;
	height: 17px;
	margin: auto 0 5px;
	background-color: #cdcdcd;
}
.prompt {
	display: flex;
	height: 20px;
	padding-left: 1px;
	line-height: 15px;
}
.prompt input {
	flex: 1;
	min-width: 0;
	padding: 0;
	border: 0;
	outline: 0;
	font: inherit;
}
.hscroll {
	display: flex;
	align-items: center;
	width: 71px;
	margin-right: 19px;
	padding: 0 6px;
	background-color: #f0f0f0;
}
.hscroll svg {
	width: 6px;
	height: 10px;
}
.hscroll i {
	width: 17px;
	height: 18px;
	margin: 0 auto 0 4px;
	background-color: #cdcdcd;
}

/* status bar */
.status {
	display: flex;
	align-items: center;
	gap: 2px;
	height: 21px;
	padding: 2px 9px 0 2px;
}
.coords {
	flex: 1;
}
.mode {
	height: 18px;
	padding: 0 8px 0 0;
	border: 1px solid transparent;
	line-height: 16px;
}
.mode.on {
	border-color: #0078d7;
	background-color: #e3eef8;
}
.status a {
	margin-left: 3px;
	color: #00f;
	text-decoration: none;
	white-space: nowrap;
}
.brand {
	display: flex;
	align-items: center;
	gap: 6px;
	margin-left: 12px;
	font-size: 13px;
}

/* overlays */
.watermark {
	position: absolute;
	right: 13px;
	bottom: 6px;
	color: #888;
	font: 18px/26px "Liberation Sans", "Noto Sans CJK SC", sans-serif;
	opacity: .7;
	pointer-events: none;
}
.meter {
	position: absolute;
	right: -2px;
	bottom: 33px;
	width: 10px;
	height: 59px;
	padding: 7px 1px 0 4px;
	border-radius: 4px 0 0 4px;
	background-color: #444a5c;
}
.meter i {
	display: block;
	height: 46px;
	background: repeating-linear-gradient(transparent 0 1px, #444a5c 1px 3px), linear-gradient(#222 35%, #d8d860 36%, #4fc46a 75%);
}
```
